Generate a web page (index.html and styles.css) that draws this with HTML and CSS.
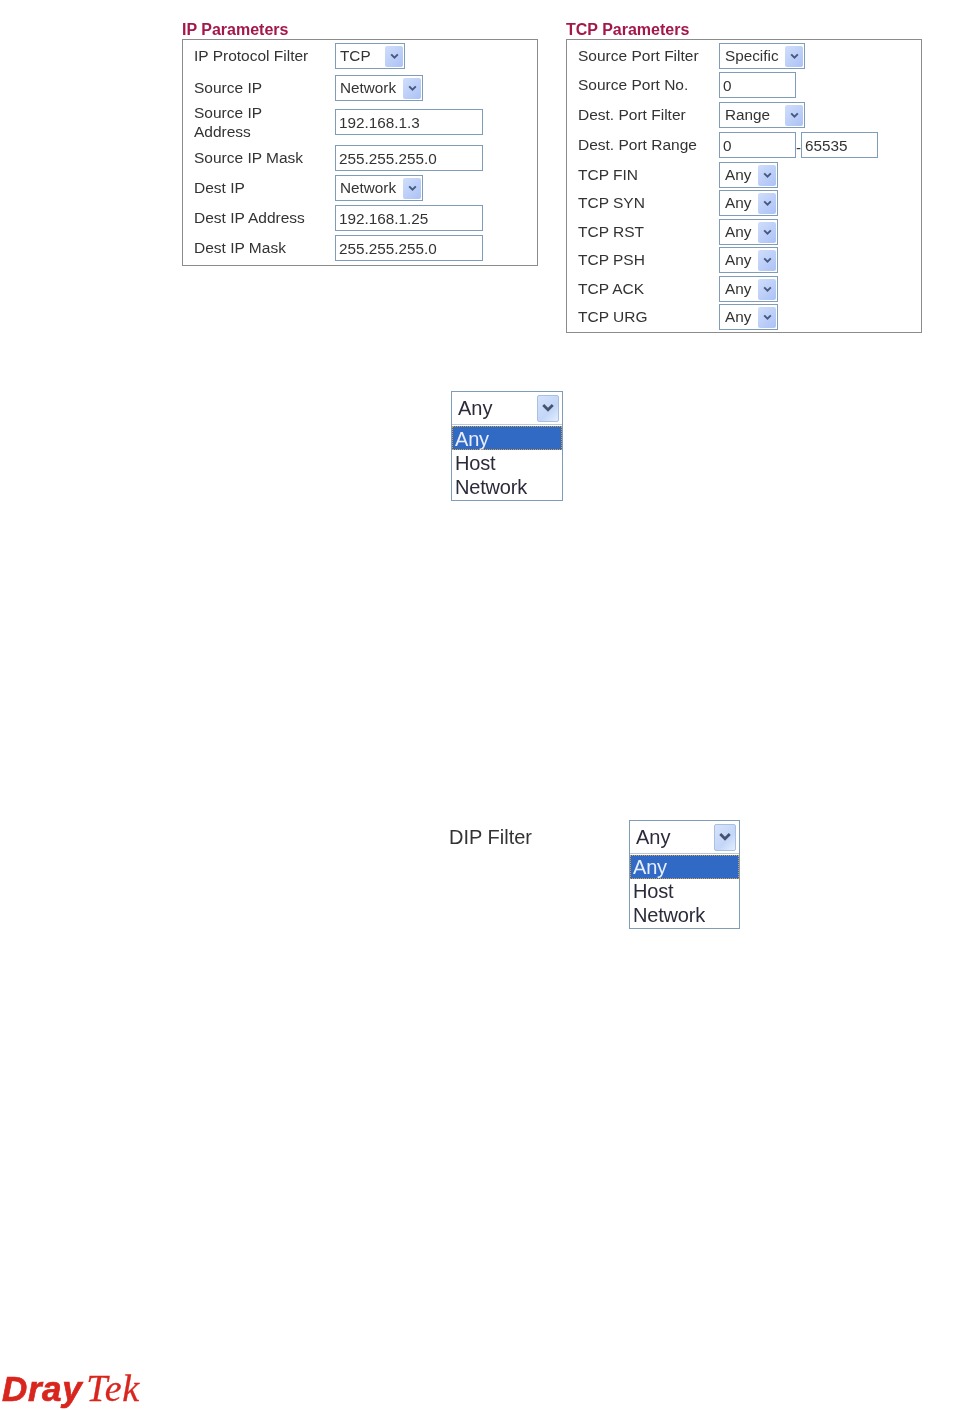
FILE: index.html
```html
<!DOCTYPE html>
<html lang="en">

<head>
    <meta charset="UTF-8">
    <meta name="viewport" content="width=device-width, initial-scale=1.0">
    <title>DrayTek Filter Parameters</title>
    <link rel="stylesheet" href="styles.css">
</head>

<body>
    <svg class="icon-defs" width="0" height="0">
        <symbol id="chevron" viewBox="0 0 10 8">
            <path d="M1.2 1.6 L5 5.4 L8.8 1.6" fill="none" stroke="currentColor" stroke-width="2.2" />
        </symbol>
    </svg>

    <div class="params">
        <section class="panel">
            <h2 class="panel-title">IP Parameters</h2>
            <div class="panel-box ip-box">
                <div class="row">
                    <span class="row-label">IP Protocol Filter</span>
                    <div class="select w-70"><span>TCP</span><i class="select-btn"><svg><use href="#chevron" /></svg></i></div>
                </div>
                <div class="row">
                    <span class="row-label">Source IP</span>
                    <div class="select w-88"><span>Network</span><i class="select-btn"><svg><use href="#chevron" /></svg></i></div>
                </div>
                <div class="row">
                    <span class="row-label">Source IP<br>Address</span>
                    <input class="text-input w-148" type="text" value="192.168.1.3">
                </div>
                <div class="row">
                    <span class="row-label">Source IP Mask</span>
                    <input class="text-input w-148" type="text" value="255.255.255.0">
                </div>
                <div class="row">
                    <span class="row-label">Dest IP</span>
                    <div class="select w-88"><span>Network</span><i class="select-btn"><svg><use href="#chevron" /></svg></i></div>
                </div>
                <div class="row">
                    <span class="row-label">Dest IP Address</span>
                    <input class="text-input w-148" type="text" value="192.168.1.25">
                </div>
                <div class="row">
                    <span class="row-label">Dest IP Mask</span>
                    <input class="text-input w-148" type="text" value="255.255.255.0">
                </div>
            </div>
        </section>

        <section class="panel">
            <h2 class="panel-title">TCP Parameters</h2>
            <div class="panel-box tcp-box">
                <div class="row">
                    <span class="row-label">Source Port Filter</span>
                    <div class="select w-86"><span>Specific</span><i class="select-btn"><svg><use href="#chevron" /></svg></i></div>
                </div>
                <div class="row">
                    <span class="row-label">Source Port No.</span>
                    <input class="text-input w-77" type="text" value="0">
                </div>
                <div class="row">
                    <span class="row-label">Dest. Port Filter</span>
                    <div class="select w-86"><span>Range</span><i class="select-btn"><svg><use href="#chevron" /></svg></i></div>
                </div>
                <div class="row">
                    <span class="row-label">Dest. Port Range</span>
                    <input class="text-input w-77" type="text" value="0">
                    <span class="range-dash">-</span>
                    <input class="text-input w-77" type="text" value="65535">
                </div>
                <div class="row">
                    <span class="row-label">TCP FIN</span>
                    <div class="select w-59"><span>Any</span><i class="select-btn"><svg><use href="#chevron" /></svg></i></div>
                </div>
                <div class="row">
                    <span class="row-label">TCP SYN</span>
                    <div class="select w-59"><span>Any</span><i class="select-btn"><svg><use href="#chevron" /></svg></i></div>
                </div>
                <div class="row">
                    <span class="row-label">TCP RST</span>
                    <div class="select w-59"><span>Any</span><i class="select-btn"><svg><use href="#chevron" /></svg></i></div>
                </div>
                <div class="row">
                    <span class="row-label">TCP PSH</span>
                    <div class="select w-59"><span>Any</span><i class="select-btn"><svg><use href="#chevron" /></svg></i></div>
                </div>
                <div class="row">
                    <span class="row-label">TCP ACK</span>
                    <div class="select w-59"><span>Any</span><i class="select-btn"><svg><use href="#chevron" /></svg></i></div>
                </div>
                <div class="row">
                    <span class="row-label">TCP URG</span>
                    <div class="select w-59"><span>Any</span><i class="select-btn"><svg><use href="#chevron" /></svg></i></div>
                </div>
            </div>
        </section>
    </div>

    <div class="figure-one">
        <div class="dropdown">
            <div class="dropdown-head"><span>Any</span><i class="dropdown-btn"><svg><use href="#chevron" /></svg></i></div>
            <ul class="dropdown-list">
                <li class="is-selected">Any</li>
                <li>Host</li>
                <li>Network</li>
            </ul>
        </div>
    </div>

    <div class="figure-two">
        <span class="figure-label">DIP Filter</span>
        <div class="dropdown dropdown-small">
            <div class="dropdown-head"><span>Any</span><i class="dropdown-btn"><svg><use href="#chevron" /></svg></i></div>
            <ul class="dropdown-list">
                <li class="is-selected">Any</li>
                <li>Host</li>
                <li>Network</li>
            </ul>
        </div>
    </div>

    <div class="logo"><span class="logo-dray">Dray</span><span class="logo-tek">Tek</span></div>
</body>

</html>
```

FILE: styles.css
```css
/* General Reset */
* {
    margin: 0;
    padding: 0;
    box-sizing: border-box;
}

body {
    font-family: "Liberation Sans", Arial, sans-serif;
    background: #fff;
    color: #333;
    height: 1410px;
    overflow: hidden;
    filter: blur(0.3px);
}

.icon-defs {
    position: absolute;
}

/* Parameter panels */
.params {
    display: flex;
    gap: 28px;
    align-items: flex-start;
    padding: 21px 0 0 182px;
}

.panel {
    width: 356px;
}

.panel-title {
    font-size: 16px;
    line-height: 18px;
    font-weight: bold;
    color: #a3174a;
}

.panel-box {
    display: flex;
    flex-direction: column;
    border: 1px solid #8c8c8c;
    padding: 3px 11px 0;
}

.ip-box {
    height: 227px;
}

.tcp-box {
    height: 294px;
}

.row {
    display: flex;
    align-items: center;
    height: 26px;
    flex: none;
    font-size: 15.5px;
}

.row-label {
    width: 141px;
    flex: none;
    line-height: 19px;
    padding-bottom: 1px;
}

.ip-box .row:nth-child(2) { margin-top: 6px; }
.ip-box .row:nth-child(3) { margin-top: 8px; }
.ip-box .row:nth-child(4) { margin-top: 10px; }
.ip-box .row:nth-child(n+5) { margin-top: 4px; }

.tcp-box .row:nth-child(2) { margin-top: 3px; }
.tcp-box .row:nth-child(3),
.tcp-box .row:nth-child(4),
.tcp-box .row:nth-child(5) { margin-top: 4px; }
.tcp-box .row:nth-child(6),
.tcp-box .row:nth-child(8),
.tcp-box .row:nth-child(10) { margin-top: 2px; }
.tcp-box .row:nth-child(7),
.tcp-box .row:nth-child(9) { margin-top: 3px; }

/* Form controls */
.select,
.text-input {
    height: 26px;
    border: 1px solid #7f9db9;
    background: #fff;
    color: #333;
    font-family: inherit;
    font-size: 15.3px;
}

.select {
    display: flex;
    align-items: center;
    justify-content: space-between;
    padding: 2px 1px 2px 4px;
}

.tcp-box .select {
    padding-left: 5px;
}

.select-btn {
    display: flex;
    align-items: center;
    justify-content: center;
    width: 18px;
    height: 21px;
    border-radius: 2px;
    background: linear-gradient(135deg, #d0defb, #acc2f6);
    color: #465a80;
}

.select-btn svg {
    width: 9px;
    height: 7px;
}

.text-input {
    padding: 1px 3px 0;
    outline: none;
}

.w-59 { width: 59px; }
.w-70 { width: 70px; }
.w-77 { width: 77px; }
.w-86 { width: 86px; }
.w-88 { width: 88px; }
.w-148 { width: 148px; }

.range-dash {
    width: 5px;
    padding-top: 5px;
    text-align: center;
    font-size: 15px;
}

/* Dropdown figures */
.figure-one {
    padding: 58px 0 0 451px;
}

.figure-one .dropdown-list li {
    line-height: 26px;
}

.figure-two {
    display: flex;
    align-items: flex-start;
    margin-top: 319px;
    padding-left: 449px;
}

.figure-label {
    width: 180px;
    flex: none;
    font-size: 20px;
    line-height: 34px;
}

.dropdown {
    width: 112px;
    height: 110px;
    border: 1px solid #7f9db9;
    font-size: 20px;
    color: #2b2b3c;
}

.dropdown-small {
    width: 111px;
    height: 109px;
}

.dropdown-head {
    display: flex;
    align-items: center;
    justify-content: space-between;
    height: 33px;
    padding: 2px 3px 2px 6px;
    border-bottom: 1px solid #b9c9dc;
}

.dropdown-btn {
    display: flex;
    align-items: center;
    justify-content: center;
    width: 22px;
    height: 27px;
    border: 1px solid #a9c0e0;
    border-radius: 2px;
    background: linear-gradient(135deg, #d6e3fb, #c3d6f8 60%, #e4effc);
    color: #44546f;
}

.dropdown-btn svg {
    width: 14px;
    height: 10px;
}

.dropdown-list {
    list-style: none;
    margin-top: 1px;
}

.dropdown-list li {
    height: 24px;
    line-height: 25px;
    padding-left: 3px;
    letter-spacing: -0.2px;
}

.is-selected {
    background: #316ac5;
    color: #e8eefb;
    outline: 1px dotted #d9a03a;
    outline-offset: -1px;
}

/* Logo */
.logo {
    margin-top: 439px;
    padding-left: 2px;
    color: #d8261e;
    font-size: 35px;
    line-height: 40px;
    white-space: nowrap;
}

.logo-dray {
    font-weight: bold;
    font-style: italic;
    letter-spacing: 0.6px;
    -webkit-text-stroke: 0.7px #d8261e;
}

.logo-tek {
    margin-left: 4px;
    font-family: "Liberation Serif", "Times New Roman", serif;
    font-size: 38px;
    font-style: italic;
    letter-spacing: 0.8px;
    -webkit-text-stroke: 0.3px #d8261e;
}
```
